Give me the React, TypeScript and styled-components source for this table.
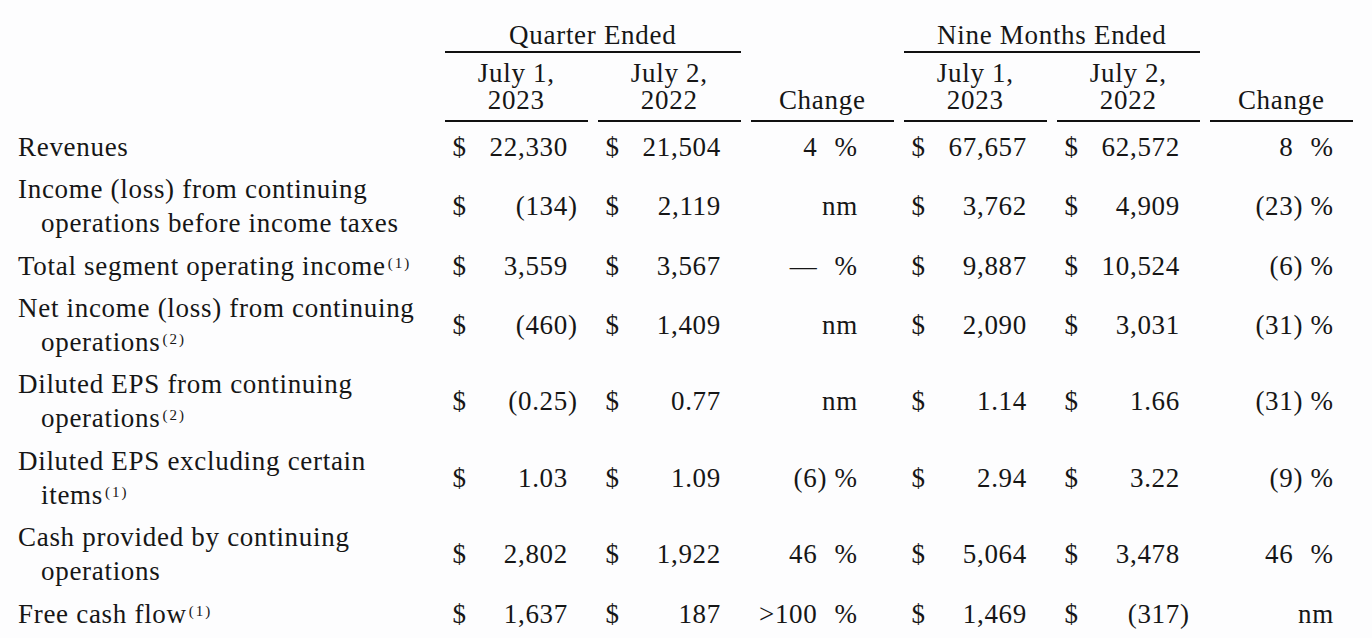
import React from "react";
import styled, { createGlobalStyle } from "styled-components";

const GlobalStyle = createGlobalStyle`
  html, body { margin: 0; padding: 0; background: #fdfdfe; }
  body {
    font-family: "Liberation Serif", "Times New Roman", serif;
    color: #161616;
  }
  #root { width: 1372px; height: 638px; }
`;

const COLS = "434.5px repeat(6, 142.5px)";

const Sheet = styled.div`
  width: 1372px;
  height: 638px;
  overflow: hidden;
  box-sizing: border-box;
  padding-top: 22px;
  font-size: 27px;
  letter-spacing: 0.7px;
`;

const Row = styled.div`
  display: grid;
  grid-template-columns: ${COLS};
  column-gap: 10.5px;
`;

const GroupRow = styled(Row)``;

const GroupHead = styled.div<{ $start: number }>`
  grid-column: ${(p) => p.$start} / span 2;
  text-align: center;
  line-height: 26px;
  padding-bottom: 3px;
  border-bottom: 2px solid #111;
`;

const HeadRow = styled(Row)`
  margin-top: 7px;
  align-items: end;
`;

const ColHead = styled.div<{ $col: number }>`
  grid-column: ${(p) => p.$col};
  text-align: center;
  line-height: 27px;
  padding-bottom: 6px;
  border-bottom: 2px solid #111;
`;

const Body = styled.div`
  margin-top: 3.8px;
`;

const DataRow = styled(Row)`
  padding: 4.2px 0;
  align-items: center;
  line-height: 34px;
`;

const Label = styled.div`
  padding-left: 18px;
  white-space: nowrap;
`;

const LabelLine = styled.div<{ $cont?: boolean }>`
  padding-left: ${(p) => (p.$cont ? 23 : 0)}px;
`;

const Note = styled.sup`
  font-size: 15px;
  letter-spacing: 2px;
  vertical-align: 7px;
  line-height: 0;
  margin-left: 2px;
`;

const Amount = styled.div`
  display: flex;
  align-items: center;
  padding-left: 7.5px;
  padding-right: 9.5px;
  white-space: nowrap;
`;

const Dollar = styled.span``;

const Num = styled.span`
  flex: 1;
  text-align: right;
`;

const Trail = styled.span`
  width: 10px;
  text-align: left;
`;

const ChangeCell = styled.div<{ $pr: number }>`
  display: flex;
  align-items: center;
  justify-content: flex-end;
  padding-right: ${(p) => p.$pr}px;
  white-space: nowrap;
`;

const Pct = styled.span`
  width: 23.5px;
  margin-left: 7px;
  text-align: left;
`;

type RowData = {
  lines: string[];
  note?: string;
  q1: string;
  q2: string;
  c1: string;
  n1: string;
  n2: string;
  c2: string;
};

const rows: RowData[] = [
  { lines: ["Revenues"], q1: "22,330", q2: "21,504", c1: "4", n1: "67,657", n2: "62,572", c2: "8" },
  {
    lines: ["Income (loss) from continuing", "operations before income taxes"],
    q1: "(134)", q2: "2,119", c1: "nm", n1: "3,762", n2: "4,909", c2: "(23)",
  },
  {
    lines: ["Total segment operating income"], note: "(1)",
    q1: "3,559", q2: "3,567", c1: "—", n1: "9,887", n2: "10,524", c2: "(6)",
  },
  {
    lines: ["Net income (loss) from continuing", "operations"], note: "(2)",
    q1: "(460)", q2: "1,409", c1: "nm", n1: "2,090", n2: "3,031", c2: "(31)",
  },
  {
    lines: ["Diluted EPS from continuing", "operations"], note: "(2)",
    q1: "(0.25)", q2: "0.77", c1: "nm", n1: "1.14", n2: "1.66", c2: "(31)",
  },
  {
    lines: ["Diluted EPS excluding certain", "items"], note: "(1)",
    q1: "1.03", q2: "1.09", c1: "(6)", n1: "2.94", n2: "3.22", c2: "(9)",
  },
  {
    lines: ["Cash provided by continuing", "operations"],
    q1: "2,802", q2: "1,922", c1: "46", n1: "5,064", n2: "3,478", c2: "46",
  },
  {
    lines: ["Free cash flow"], note: "(1)",
    q1: "1,637", q2: "187", c1: ">100", n1: "1,469", n2: "(317)", c2: "nm",
  },
];

const split = (v: string) =>
  v.endsWith(")") ? { body: v.slice(0, -1), trail: ")" } : { body: v, trail: "" };

const AmountCell = ({ value }: { value: string }) => {
  const { body, trail } = split(value);
  return (
    <Amount>
      <Dollar>$</Dollar>
      <Num>{body}</Num>
      <Trail>{trail}</Trail>
    </Amount>
  );
};

const Change = ({ value, pr }: { value: string; pr: number }) => {
  if (value === "nm") {
    return <ChangeCell $pr={pr}>nm</ChangeCell>;
  }
  const { body, trail } = split(value);
  return (
    <ChangeCell $pr={pr}>
      <span>{body}</span>
      <Trail>{trail}</Trail>
      <Pct>%</Pct>
    </ChangeCell>
  );
};

const RowLabel = ({ lines, note }: { lines: string[]; note?: string }) => (
  <Label>
    {lines.map((l, i) => (
      <LabelLine key={i} $cont={i > 0}>
        {l}
        {i === lines.length - 1 && note ? <Note>{note}</Note> : null}
      </LabelLine>
    ))}
  </Label>
);

export default function App() {
  return (
    <>
      <GlobalStyle />
      <Sheet>
        <GroupRow>
          <GroupHead $start={2}>Quarter Ended</GroupHead>
          <GroupHead $start={5}>Nine Months Ended</GroupHead>
        </GroupRow>
        <HeadRow>
          <ColHead $col={2}>July 1,<br />2023</ColHead>
          <ColHead $col={3}>July 2,<br />2022</ColHead>
          <ColHead $col={4}>Change</ColHead>
          <ColHead $col={5}>July 1,<br />2023</ColHead>
          <ColHead $col={6}>July 2,<br />2022</ColHead>
          <ColHead $col={7}>Change</ColHead>
        </HeadRow>
        <Body>
          {rows.map((r, i) => (
            <DataRow key={i}>
              <RowLabel lines={r.lines} note={r.note} />
              <AmountCell value={r.q1} />
              <AmountCell value={r.q2} />
              <Change value={r.c1} pr={35.5} />
              <AmountCell value={r.n1} />
              <AmountCell value={r.n2} />
              <Change value={r.c2} pr={18.5} />
            </DataRow>
          ))}
        </Body>
      </Sheet>
    </>
  );
}
